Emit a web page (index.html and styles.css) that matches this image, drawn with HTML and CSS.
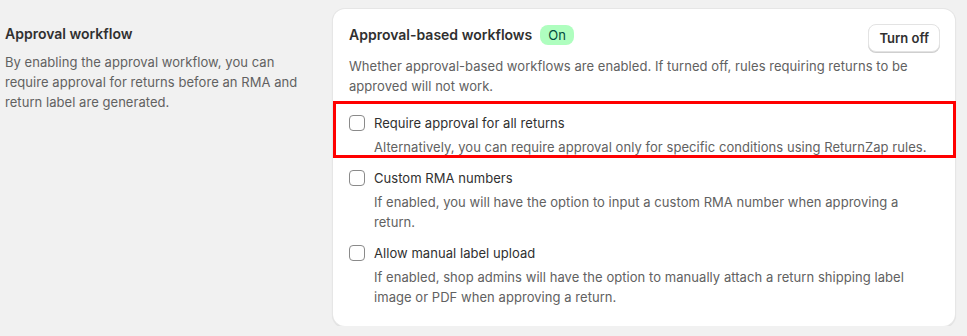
FILE: index.html
```html
<!doctype html>
<html lang="en">
<head>
    <meta charset="UTF-8">
    <title>Approval workflow</title>
    <link rel="stylesheet" href="styles.css">
</head>
<body>
    <div class="section">
      <div class="section-info">
        <h2 class="section-title">Approval workflow</h2>
        <p class="section-text">By enabling the approval workflow, you can require approval for returns before an RMA and return label are generated.</p>
      </div>
      <div class="card">
        <div class="card-header">
          <div class="card-heading">
            <h3 class="card-title">Approval-based workflows</h3>
            <span class="badge">On</span>
          </div>
          <button class="button">Turn off</button>
        </div>
        <p class="card-text">Whether approval-based workflows are enabled. If turned off, rules requiring returns to be approved will not work.</p>
        <div class="options">
          <div class="option highlight">
            <label class="option-row"><input type="checkbox" class="checkbox"><span class="option-label">Require approval for all returns</span></label>
            <p class="option-help">Alternatively, you can require approval only for specific conditions using ReturnZap rules.</p>
          </div>
          <div class="option">
            <label class="option-row"><input type="checkbox" class="checkbox"><span class="option-label">Custom RMA numbers</span></label>
            <p class="option-help">If enabled, you will have the option to input a custom RMA number when approving a return.</p>
          </div>
          <div class="option">
            <label class="option-row"><input type="checkbox" class="checkbox"><span class="option-label">Allow manual label upload</span></label>
            <p class="option-help">If enabled, shop admins will have the option to manually attach a return shipping label image or PDF when approving a return.</p>
          </div>
        </div>
      </div>
    </div>
</body>
</html>
```

FILE: styles.css
```css
body {
  margin: 0;
  background-color: #f1f1f1;
  font-family: Inter, "Liberation Sans", sans-serif;
  font-size: 13px;
  line-height: 20px;
  letter-spacing: 0.05px;
  color: #303030;
}
.section {
  display: flex;
  align-items: flex-start;
  gap: 23px;
  padding: 9px 0 0 5px;
}
.section-info {
  width: 305px;
  padding-top: 15px;
}
.section-title {
  margin: 0;
  font-size: 14px;
  font-weight: 600;
  line-height: 20px;
  letter-spacing: 0;
}
.section-text {
  margin: 8px 0 0;
  color: #616161;
}
.card {
  width: 590px;
  padding: 16px 16px 19px;
  background-color: #fff;
  border-radius: 12px;
  box-shadow: 0 0 0 1px #e6e6e6, 0 1px 1px 1px rgba(0, 0, 0, 0.08);
}
.card-header {
  display: flex;
  justify-content: space-between;
  align-items: flex-start;
}
.card-heading {
  display: flex;
  align-items: center;
  gap: 8px;
}
.card-title {
  margin: 0;
  font-size: 14px;
  font-weight: 600;
  line-height: 20px;
  letter-spacing: 0;
}
.badge {
  padding: 0 8px;
  border-radius: 8px;
  background-color: #affebf;
  color: #014b40;
  font-size: 13px;
  line-height: 20px;
}
.button {
  height: 28px;
  margin: -1px -1px 0 0;
  padding: 0 10px;
  border: 1px solid #e3e3e3;
  border-radius: 8px;
  background-color: #fff;
  box-shadow: 0 1px 0 #cfcfcf;
  font-family: inherit;
  font-size: 13px;
  font-weight: 600;
  letter-spacing: 0;
  color: #303030;
}
.card-text {
  margin: 4px 0 0;
  color: #616161;
}
.options {
  display: flex;
  flex-direction: column;
  gap: 11px;
  padding-top: 17px;
}
.option-row {
  display: flex;
  align-items: center;
  gap: 9px;
}
.checkbox {
  appearance: none;
  width: 16px;
  height: 16px;
  margin: 0;
  border: 1px solid #8a8a8a;
  border-radius: 4px;
  background-color: #fff;
}
.option-help {
  margin: 4px 0 0 25px;
  color: #616161;
}
.highlight {
  position: relative;
}
.highlight::after {
  content: "";
  position: absolute;
  top: -12px;
  left: -16px;
  right: -17px;
  bottom: -1px;
  border: 3px solid #f00;
}
```
